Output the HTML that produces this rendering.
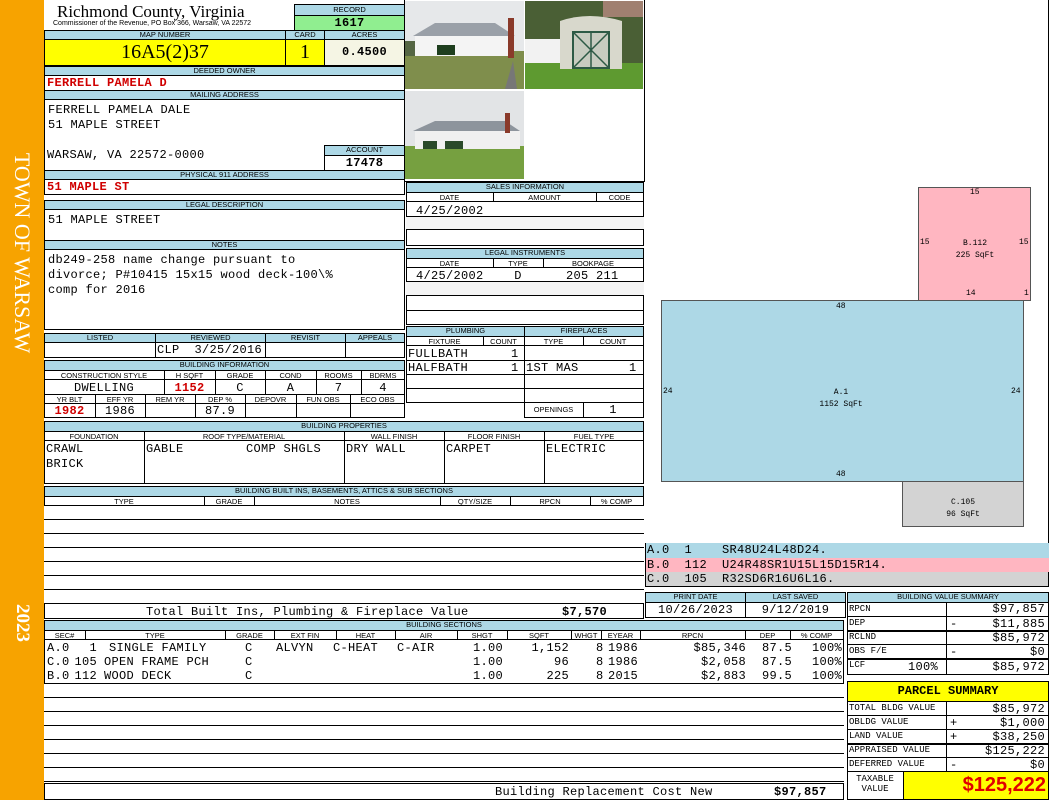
<!DOCTYPE html>
<html><head><meta charset="utf-8"><style>
*{margin:0;padding:0}
body{width:1050px;height:800px;position:relative;background:#fff;overflow:hidden;font-family:"Liberation Sans",sans-serif}
.a{position:absolute;box-sizing:border-box;white-space:nowrap}
.h{position:absolute;box-sizing:border-box;background:#add8e6;border:1px solid #000;font-size:7.5px;text-align:center;line-height:8px;color:#000;white-space:nowrap;overflow:hidden}
.w{position:absolute;box-sizing:border-box;background:#fff;border:1px solid #000;white-space:nowrap;overflow:hidden}
.m{font-family:"Liberation Mono",monospace;font-size:12px;line-height:14px;letter-spacing:0.3px}
.r{color:#d00000;font-weight:bold}
.c{text-align:center}
.rt{text-align:right;padding-right:3px}
.sv{font-family:"Liberation Mono",monospace;font-size:9px}
.hl{font-size:7.5px;text-align:center;position:absolute}
</style></head><body>
<div class="a" style="left:0;top:0;width:44px;height:800px;background:#f7a300"></div>
<div class="a" style="left:-108px;top:240px;width:260px;height:26px;transform:rotate(90deg);color:#fff;font:22px 'Liberation Serif',serif;text-align:center">TOWN OF WARSAW</div>
<div class="a" style="left:-8px;top:612px;width:60px;height:22px;transform:rotate(90deg);color:#fff;font:bold 19px 'Liberation Serif',serif;text-align:center">2023</div>

<div class="a" style="left:57px;top:2px;font:17px 'Liberation Serif',serif">Richmond County, Virginia</div>
<div class="a" style="left:53px;top:20px;font:7px 'Liberation Sans'">Commissioner of the Revenue, PO Box 366, Warsaw, VA 22572</div>
<div class="h" style="left:294px;top:4px;width:111px;height:12px;line-height:10px">RECORD</div>
<div class="w m" style="left:294px;top:15px;width:111px;height:16px;background:#90ee90;text-align:center;font-weight:bold;line-height:14px">1617</div>

<div class="h" style="left:44px;top:30px;width:242px;height:10px">MAP NUMBER</div>
<div class="h" style="left:285px;top:30px;width:40px;height:10px">CARD</div>
<div class="h" style="left:324px;top:30px;width:81px;height:10px">ACRES</div>
<div class="w c" style="left:44px;top:39px;width:242px;height:27px;background:#ffff00;font:20px 'Liberation Serif';line-height:25px">16A5(2)37</div>
<div class="w c" style="left:285px;top:39px;width:40px;height:27px;background:#ffff00;font:20px 'Liberation Serif';line-height:25px">1</div>
<div class="w c m" style="left:324px;top:39px;width:81px;height:27px;background:#f5f5e4;font-weight:bold;line-height:25px">0.4500</div>

<div class="h" style="left:44px;top:66px;width:361px;height:10px">DEEDED OWNER</div>
<div class="w m r" style="left:44px;top:75px;width:361px;height:16px;padding-left:2px">FERRELL PAMELA D</div>
<div class="h" style="left:44px;top:90px;width:361px;height:10px">MAILING ADDRESS</div>
<div class="w m" style="left:44px;top:99px;width:361px;height:72px;padding:3px 0 0 3px;line-height:15px">FERRELL PAMELA DALE<br>51 MAPLE STREET</div>
<div class="a m" style="left:47px;top:148px">WARSAW, VA 22572-0000</div>
<div class="h" style="left:324px;top:145px;width:81px;height:11px">ACCOUNT</div>
<div class="w m c" style="left:324px;top:155px;width:81px;height:16px;font-weight:bold;line-height:14px">17478</div>
<div class="h" style="left:44px;top:170px;width:361px;height:10px">PHYSICAL 911 ADDRESS</div>
<div class="w m r" style="left:44px;top:179px;width:361px;height:16px;padding-left:2px">51 MAPLE ST</div>

<div class="h" style="left:44px;top:200px;width:361px;height:10px">LEGAL DESCRIPTION</div>
<div class="w m" style="left:44px;top:209px;width:361px;height:32px;padding:3px 0 0 3px">51 MAPLE STREET</div>
<div class="h" style="left:44px;top:240px;width:361px;height:10px">NOTES</div>
<div class="w m" style="left:44px;top:249px;width:361px;height:81px;padding:3px 0 0 3px;line-height:15px">db249-258 name change pursuant to<br>divorce; P#10415 15x15 wood deck-100\%<br>comp for 2016</div>

<div class="h" style="left:44px;top:333px;width:112px;height:10px">LISTED</div>
<div class="h" style="left:155px;top:333px;width:111px;height:10px">REVIEWED</div>
<div class="h" style="left:265px;top:333px;width:81px;height:10px">REVISIT</div>
<div class="h" style="left:345px;top:333px;width:60px;height:10px">APPEALS</div>
<div class="w" style="left:44px;top:342px;width:112px;height:16px"></div>
<div class="w m" style="left:155px;top:342px;width:111px;height:16px;padding-left:1px">CLP&nbsp;&nbsp;3/25/2016</div>
<div class="w" style="left:265px;top:342px;width:81px;height:16px"></div>
<div class="w" style="left:345px;top:342px;width:60px;height:16px"></div>

<div class="h" style="left:44px;top:360px;width:361px;height:11px">BUILDING INFORMATION</div>
<div class="w" style="left:44px;top:370px;width:361px;height:48px"></div>
<div class="hl" style="left:44px;top:371px;width:120px">CONSTRUCTION STYLE</div>
<div class="hl" style="left:164px;top:371px;width:51px">H SQFT</div>
<div class="hl" style="left:215px;top:371px;width:50px">GRADE</div>
<div class="hl" style="left:265px;top:371px;width:51px">COND</div>
<div class="hl" style="left:316px;top:371px;width:45px">ROOMS</div>
<div class="hl" style="left:361px;top:371px;width:44px">BDRMS</div>
<div class="a" style="left:44px;top:379px;width:361px;border-top:1px solid #000"></div>
<div class="a m c" style="left:44px;top:381px;width:120px">DWELLING</div>
<div class="a m c r" style="left:164px;top:381px;width:51px">1152</div>
<div class="a m c" style="left:215px;top:381px;width:50px">C</div>
<div class="a m c" style="left:265px;top:381px;width:51px">A</div>
<div class="a m c" style="left:316px;top:381px;width:45px">7</div>
<div class="a m c" style="left:361px;top:381px;width:44px">4</div>
<div class="a" style="left:164px;top:370px;height:24px;border-left:1px solid #000"></div>
<div class="a" style="left:215px;top:370px;height:24px;border-left:1px solid #000"></div>
<div class="a" style="left:265px;top:370px;height:24px;border-left:1px solid #000"></div>
<div class="a" style="left:316px;top:370px;height:24px;border-left:1px solid #000"></div>
<div class="a" style="left:361px;top:370px;height:24px;border-left:1px solid #000"></div>
<div class="a" style="left:44px;top:394px;width:361px;border-top:1px solid #000"></div>
<div class="hl" style="left:44px;top:395px;width:51px">YR BLT</div>
<div class="hl" style="left:95px;top:395px;width:50px">EFF YR</div>
<div class="hl" style="left:145px;top:395px;width:50px">REM YR</div>
<div class="hl" style="left:195px;top:395px;width:50px">DEP %</div>
<div class="hl" style="left:245px;top:395px;width:51px">DEPOVR</div>
<div class="hl" style="left:296px;top:395px;width:54px">FUN OBS</div>
<div class="hl" style="left:350px;top:395px;width:55px">ECO OBS</div>
<div class="a" style="left:44px;top:403px;width:361px;border-top:1px solid #000"></div>
<div class="a m c r" style="left:44px;top:404px;width:51px">1982</div>
<div class="a m c" style="left:95px;top:404px;width:50px">1986</div>
<div class="a m c" style="left:195px;top:404px;width:50px">87.9</div>
<div class="a" style="left:95px;top:394px;height:24px;border-left:1px solid #000"></div>
<div class="a" style="left:145px;top:394px;height:24px;border-left:1px solid #000"></div>
<div class="a" style="left:195px;top:394px;height:24px;border-left:1px solid #000"></div>
<div class="a" style="left:245px;top:394px;height:24px;border-left:1px solid #000"></div>
<div class="a" style="left:296px;top:394px;height:24px;border-left:1px solid #000"></div>
<div class="a" style="left:350px;top:394px;height:24px;border-left:1px solid #000"></div>

<div class="a" style="left:404px;top:0;width:241px;height:182px;border:1px solid #000;border-top:none"></div>
<svg class="a" style="left:405px;top:1px" width="119" height="88" viewBox="0 0 119 88"><rect width="119" height="88" fill="#e6e8ea"/><rect y="50" width="119" height="38" fill="#7f8e4c"/><polygon points="8,35 30,22 90,22 110,35" fill="#9aa0a8"/><rect x="10" y="35" width="95" height="20" fill="#f4f4f4"/><rect x="103" y="17" width="6" height="40" fill="#8a3a2a"/><rect x="32" y="44" width="18" height="10" fill="#1e3e1e"/><rect x="0" y="40" width="10" height="15" fill="#556644"/><path d="M108 60 L100 88 L112 88 Z" fill="#777"/></svg>
<svg class="a" style="left:525px;top:1px" width="118" height="88" viewBox="0 0 118 88"><rect width="118" height="88" fill="#4a5f35"/><rect y="38" width="35" height="26" fill="#f2f2f2"/><rect y="62" width="118" height="26" fill="#5e9a30"/><path d="M35 20 Q64 10 97 20 L97 68 L35 68 Z" fill="#d8d8cc"/><rect x="48" y="31" width="36" height="36" fill="#c8ccc0" stroke="#2d5a45" stroke-width="2"/><path d="M48 31 L84 67 M84 31 L48 67 M66 31 V67" stroke="#2d5a45" stroke-width="1.5"/><rect x="78" y="0" width="40" height="16" fill="#a08070"/></svg>
<svg class="a" style="left:405px;top:91px" width="119" height="88" viewBox="0 0 119 88"><rect width="119" height="88" fill="#e2e4e6"/><rect y="55" width="119" height="33" fill="#76a040"/><polygon points="8,40 30,30 100,30 115,40" fill="#8d949c"/><rect x="10" y="40" width="105" height="18" fill="#f0f0f0"/><rect x="18" y="50" width="14" height="8" fill="#2a4a2a"/><rect x="40" y="50" width="18" height="8" fill="#2a4a2a"/><rect x="100" y="22" width="5" height="20" fill="#8a3a2a"/></svg>

<div class="h" style="left:406px;top:182px;width:238px;height:11px">SALES INFORMATION</div>
<div class="w" style="left:406px;top:192px;width:238px;height:54px"></div>
<div class="hl" style="left:406px;top:193px;width:87px">DATE</div>
<div class="hl" style="left:493px;top:193px;width:103px">AMOUNT</div>
<div class="hl" style="left:596px;top:193px;width:47px">CODE</div>
<div class="a" style="left:493px;top:192px;height:10px;border-left:1px solid #000"></div>
<div class="a" style="left:596px;top:192px;height:10px;border-left:1px solid #000"></div>
<div class="a" style="left:406px;top:201px;width:238px;border-top:1px solid #000"></div>
<div class="a m" style="left:416px;top:204px">4/25/2002</div>
<div class="a" style="left:406px;top:216px;width:238px;height:14px;border-top:1px solid #000;border-bottom:1px solid #000;background:#f4f4f4"></div>

<div class="h" style="left:406px;top:248px;width:238px;height:11px">LEGAL INSTRUMENTS</div>
<div class="w" style="left:406px;top:258px;width:238px;height:67px"></div>
<div class="hl" style="left:406px;top:259px;width:87px">DATE</div>
<div class="hl" style="left:493px;top:259px;width:50px">TYPE</div>
<div class="hl" style="left:543px;top:259px;width:100px">BOOKPAGE</div>
<div class="a" style="left:493px;top:258px;height:10px;border-left:1px solid #000"></div>
<div class="a" style="left:543px;top:258px;height:10px;border-left:1px solid #000"></div>
<div class="a" style="left:406px;top:267px;width:238px;border-top:1px solid #000"></div>
<div class="a m" style="left:416px;top:269px">4/25/2002</div>
<div class="a m c" style="left:493px;top:269px;width:50px">D</div>
<div class="a m" style="left:566px;top:269px">205 211</div>
<div class="a" style="left:406px;top:281px;width:238px;height:15px;border-top:1px solid #000;border-bottom:1px solid #000;background:#f4f4f4"></div>
<div class="a" style="left:406px;top:310px;width:238px;border-top:1px solid #000"></div>

<div class="h" style="left:406px;top:326px;width:119px;height:11px">PLUMBING</div>
<div class="h" style="left:524px;top:326px;width:120px;height:11px">FIREPLACES</div>
<div class="w" style="left:406px;top:336px;width:119px;height:67px"></div>
<div class="w" style="left:524px;top:336px;width:120px;height:82px"></div>
<div class="hl" style="left:406px;top:337px;width:77px">FIXTURE</div>
<div class="hl" style="left:483px;top:337px;width:41px">COUNT</div>
<div class="hl" style="left:524px;top:337px;width:59px">TYPE</div>
<div class="hl" style="left:583px;top:337px;width:60px">COUNT</div>
<div class="a" style="left:483px;top:336px;height:10px;border-left:1px solid #000"></div>
<div class="a" style="left:583px;top:336px;height:10px;border-left:1px solid #000"></div>
<div class="a" style="left:406px;top:345px;width:238px;border-top:1px solid #000"></div>
<div class="a m" style="left:408px;top:347px">FULLBATH</div><div class="a m" style="left:511px;top:347px">1</div>
<div class="a" style="left:406px;top:360px;width:238px;border-top:1px solid #000"></div>
<div class="a m" style="left:408px;top:361px">HALFBATH</div><div class="a m" style="left:511px;top:361px">1</div>
<div class="a m" style="left:526px;top:361px">1ST MAS</div><div class="a m" style="left:629px;top:361px">1</div>
<div class="a" style="left:406px;top:374px;width:238px;border-top:1px solid #000"></div>
<div class="a" style="left:406px;top:388px;width:238px;border-top:1px solid #000"></div>
<div class="a" style="left:524px;top:402px;width:120px;border-top:1px solid #000"></div>
<div class="a" style="left:583px;top:402px;height:16px;border-left:1px solid #000"></div>
<div class="hl" style="left:524px;top:405px;width:59px">OPENINGS</div>
<div class="a m c" style="left:583px;top:403px;width:60px">1</div>

<div class="h" style="left:44px;top:421px;width:600px;height:11px">BUILDING PROPERTIES</div>
<div class="w" style="left:44px;top:431px;width:600px;height:53px"></div>
<div class="a" style="left:44px;top:440px;width:600px;border-top:1px solid #000"></div>
<div class="hl" style="left:44px;top:432px;width:100px">FOUNDATION</div>
<div class="hl" style="left:144px;top:432px;width:200px">ROOF TYPE/MATERIAL</div>
<div class="hl" style="left:344px;top:432px;width:100px">WALL FINISH</div>
<div class="hl" style="left:444px;top:432px;width:100px">FLOOR FINISH</div>
<div class="hl" style="left:544px;top:432px;width:100px">FUEL TYPE</div>
<div class="a" style="left:144px;top:431px;height:53px;border-left:1px solid #000"></div>
<div class="a" style="left:344px;top:431px;height:53px;border-left:1px solid #000"></div>
<div class="a" style="left:444px;top:431px;height:53px;border-left:1px solid #000"></div>
<div class="a" style="left:544px;top:431px;height:53px;border-left:1px solid #000"></div>
<div class="a m" style="left:46px;top:442px;line-height:15px">CRAWL<br>BRICK</div>
<div class="a m" style="left:146px;top:442px">GABLE</div>
<div class="a m" style="left:246px;top:442px">COMP SHGLS</div>
<div class="a m" style="left:346px;top:442px">DRY WALL</div>
<div class="a m" style="left:446px;top:442px">CARPET</div>
<div class="a m" style="left:546px;top:442px">ELECTRIC</div>

<div class="h" style="left:44px;top:486px;width:600px;height:11px">BUILDING BUILT INS, BASEMENTS, ATTICS &amp; SUB SECTIONS</div>
<div class="w" style="left:44px;top:496px;width:600px;height:123px"></div>
<div class="hl" style="left:44px;top:497px;width:160px">TYPE</div>
<div class="hl" style="left:204px;top:497px;width:50px">GRADE</div>
<div class="hl" style="left:254px;top:497px;width:186px">NOTES</div>
<div class="hl" style="left:440px;top:497px;width:70px">QTY/SIZE</div>
<div class="hl" style="left:510px;top:497px;width:80px">RPCN</div>
<div class="hl" style="left:590px;top:497px;width:53px">% COMP</div>
<div class="a" style="left:204px;top:496px;height:10px;border-left:1px solid #000"></div>
<div class="a" style="left:254px;top:496px;height:10px;border-left:1px solid #000"></div>
<div class="a" style="left:440px;top:496px;height:10px;border-left:1px solid #000"></div>
<div class="a" style="left:510px;top:496px;height:10px;border-left:1px solid #000"></div>
<div class="a" style="left:590px;top:496px;height:10px;border-left:1px solid #000"></div>
<div class="a" style="left:44px;top:505px;width:600px;height:98px;border-top:1px solid #000;background:repeating-linear-gradient(#fff 0 13px,#000 13px 14px)"></div>
<div class="a" style="left:44px;top:603px;width:600px;border-top:1px solid #000"></div>
<div class="a m" style="left:146px;top:605px">Total Built Ins, Plumbing &amp; Fireplace Value</div>
<div class="a m" style="left:562px;top:605px;font-weight:bold">$7,570</div>

<div class="h" style="left:44px;top:620px;width:800px;height:11px">BUILDING SECTIONS</div>
<div class="w" style="left:44px;top:630px;width:800px;height:170px"></div>
<div class="a" style="left:44px;top:639px;width:800px;border-top:1px solid #000"></div>
<div class="hl" style="left:44px;top:631px;width:41px">SEC#</div>
<div class="hl" style="left:85px;top:631px;width:140px">TYPE</div>
<div class="hl" style="left:225px;top:631px;width:49px">GRADE</div>
<div class="hl" style="left:274px;top:631px;width:62px">EXT FIN</div>
<div class="hl" style="left:336px;top:631px;width:59px">HEAT</div>
<div class="hl" style="left:395px;top:631px;width:62px">AIR</div>
<div class="hl" style="left:457px;top:631px;width:50px">SHGT</div>
<div class="hl" style="left:507px;top:631px;width:64px">SQFT</div>
<div class="hl" style="left:571px;top:631px;width:30px">WHGT</div>
<div class="hl" style="left:601px;top:631px;width:39px">EYEAR</div>
<div class="hl" style="left:640px;top:631px;width:105px">RPCN</div>
<div class="hl" style="left:745px;top:631px;width:45px">DEP</div>
<div class="hl" style="left:790px;top:631px;width:53px">% COMP</div>
<div class="a" style="left:85px;top:630px;height:10px;border-left:1px solid #000"></div>
<div class="a" style="left:225px;top:630px;height:10px;border-left:1px solid #000"></div>
<div class="a" style="left:274px;top:630px;height:10px;border-left:1px solid #000"></div>
<div class="a" style="left:336px;top:630px;height:10px;border-left:1px solid #000"></div>
<div class="a" style="left:395px;top:630px;height:10px;border-left:1px solid #000"></div>
<div class="a" style="left:457px;top:630px;height:10px;border-left:1px solid #000"></div>
<div class="a" style="left:507px;top:630px;height:10px;border-left:1px solid #000"></div>
<div class="a" style="left:571px;top:630px;height:10px;border-left:1px solid #000"></div>
<div class="a" style="left:601px;top:630px;height:10px;border-left:1px solid #000"></div>
<div class="a" style="left:640px;top:630px;height:10px;border-left:1px solid #000"></div>
<div class="a" style="left:745px;top:630px;height:10px;border-left:1px solid #000"></div>
<div class="a" style="left:790px;top:630px;height:10px;border-left:1px solid #000"></div>

<div class="a m" style="left:47px;top:641px">A.0</div><div class="a m" style="left:56px;top:641px;width:41px;text-align:right">1</div><div class="a m" style="left:109px;top:641px">SINGLE FAMILY</div><div class="a m" style="left:245px;top:641px">C</div><div class="a m" style="left:276px;top:641px">ALVYN</div><div class="a m" style="left:333px;top:641px">C-HEAT</div><div class="a m" style="left:397px;top:641px">C-AIR</div><div class="a m" style="left:460px;top:641px;width:43px;text-align:right">1.00</div><div class="a m" style="left:510px;top:641px;width:59px;text-align:right">1,152</div><div class="a m" style="left:596px;top:641px">8</div><div class="a m" style="left:608px;top:641px">1986</div><div class="a m" style="left:660px;top:641px;width:86px;text-align:right">$85,346</div><div class="a m" style="left:750px;top:641px;width:42px;text-align:right">87.5</div><div class="a m" style="left:795px;top:641px;width:47px;text-align:right">100%</div>
<div class="a m" style="left:47px;top:655px">C.0</div><div class="a m" style="left:56px;top:655px;width:41px;text-align:right">105</div><div class="a m" style="left:104px;top:655px">OPEN FRAME PCH</div><div class="a m" style="left:245px;top:655px">C</div><div class="a m" style="left:460px;top:655px;width:43px;text-align:right">1.00</div><div class="a m" style="left:510px;top:655px;width:59px;text-align:right">96</div><div class="a m" style="left:596px;top:655px">8</div><div class="a m" style="left:608px;top:655px">1986</div><div class="a m" style="left:660px;top:655px;width:86px;text-align:right">$2,058</div><div class="a m" style="left:750px;top:655px;width:42px;text-align:right">87.5</div><div class="a m" style="left:795px;top:655px;width:47px;text-align:right">100%</div>
<div class="a m" style="left:47px;top:669px">B.0</div><div class="a m" style="left:56px;top:669px;width:41px;text-align:right">112</div><div class="a m" style="left:104px;top:669px">WOOD DECK</div><div class="a m" style="left:245px;top:669px">C</div><div class="a m" style="left:460px;top:669px;width:43px;text-align:right">1.00</div><div class="a m" style="left:510px;top:669px;width:59px;text-align:right">225</div><div class="a m" style="left:596px;top:669px">8</div><div class="a m" style="left:608px;top:669px">2015</div><div class="a m" style="left:660px;top:669px;width:86px;text-align:right">$2,883</div><div class="a m" style="left:750px;top:669px;width:42px;text-align:right">99.5</div><div class="a m" style="left:795px;top:669px;width:47px;text-align:right">100%</div>

<div class="a" style="left:44px;top:683px;width:800px;height:100px;border-top:1px solid #000;background:repeating-linear-gradient(#fff 0 13px,#000 13px 14px)"></div>
<div class="a" style="left:44px;top:783px;width:800px;border-top:1px solid #000"></div>
<div class="a m" style="left:495px;top:785px">Building Replacement Cost New</div>
<div class="a m" style="left:774px;top:785px;font-weight:bold">$97,857</div>

<div class="a" style="left:645px;top:0;width:404px;height:544px;border:1px solid #000;border-left:none;border-top:none"></div>
<div class="a" style="left:918px;top:187px;width:113px;height:114px;background:#ffb6c1;border:1px solid #555"></div>
<div class="a" style="left:661px;top:300px;width:363px;height:182px;background:#add8e6;border:1px solid #555"></div>
<div class="a" style="left:902px;top:481px;width:122px;height:46px;background:#d3d3d3;border:1px solid #555"></div>
<div class="a sv" style="font-size:8px;left:970px;top:188px">15</div>
<div class="a sv" style="font-size:8px;left:920px;top:238px">15</div>
<div class="a sv" style="font-size:8px;left:1019px;top:238px">15</div>
<div class="a sv c" style="font-size:8px;left:940px;top:238px;width:70px;line-height:12px">B.112<br>225 SqFt</div>
<div class="a sv" style="font-size:8px;left:966px;top:289px">14</div>
<div class="a sv" style="font-size:8px;left:1024px;top:289px">1</div>
<div class="a sv" style="font-size:8px;left:836px;top:302px">48</div>
<div class="a sv" style="font-size:8px;left:663px;top:387px">24</div>
<div class="a sv" style="font-size:8px;left:1011px;top:387px">24</div>
<div class="a sv c" style="font-size:8px;left:806px;top:387px;width:70px;line-height:12px">A.1<br>1152 SqFt</div>
<div class="a sv" style="font-size:8px;left:836px;top:470px">48</div>
<div class="a sv c" style="font-size:8px;left:928px;top:497px;width:70px;line-height:12px">C.105<br>96 SqFt</div>

<div class="a m" style="left:645px;top:543px;width:404px;height:15px;background:#add8e6;border-left:1px solid #000;padding-left:1px;white-space:pre;line-height:15px">A.0  1    SR48U24L48D24.</div>
<div class="a m" style="left:645px;top:558px;width:404px;height:14px;background:#ffb6c1;border-left:1px solid #000;padding-left:1px;white-space:pre;line-height:14px">B.0  112  U24R48SR1U15L15D15R14.</div>
<div class="a m" style="left:645px;top:572px;width:404px;height:15px;background:#d3d3d3;border:1px solid #000;border-top:none;padding-left:1px;white-space:pre;line-height:14px">C.0  105  R32SD6R16U6L16.</div>

<div class="h" style="left:645px;top:592px;width:101px;height:11px">PRINT DATE</div>
<div class="h" style="left:745px;top:592px;width:101px;height:11px">LAST SAVED</div>
<div class="w m c" style="left:645px;top:602px;width:101px;height:16px">10/26/2023</div>
<div class="w m c" style="left:745px;top:602px;width:101px;height:16px">9/12/2019</div>

<div class="h" style="left:847px;top:592px;width:202px;height:11px">BUILDING VALUE SUMMARY</div>
<div class="w" style="left:847px;top:602px;width:202px;height:73px"></div>
<div class="a" style="left:946px;top:602px;height:73px;border-left:1px solid #000"></div>
<div class="a" style="left:847px;top:616px;width:202px;border-top:1px solid #000"></div>
<div class="a" style="left:847px;top:630px;width:202px;border-top:2px solid #000"></div>
<div class="a" style="left:847px;top:644px;width:202px;border-top:1px solid #000"></div>
<div class="a" style="left:847px;top:658px;width:202px;border-top:2px solid #000"></div>
<div class="a sv" style="left:849px;top:604px">RPCN</div><div class="a m rt" style="left:946px;top:602px;width:102px">$97,857</div>
<div class="a sv" style="left:849px;top:618px">DEP</div><div class="a m" style="left:950px;top:617px">-</div><div class="a m rt" style="left:946px;top:617px;width:102px">$11,885</div>
<div class="a sv" style="left:849px;top:632px">RCLND</div><div class="a m rt" style="left:946px;top:631px;width:102px">$85,972</div>
<div class="a sv" style="left:849px;top:646px">OBS F/E</div><div class="a m" style="left:950px;top:645px">-</div><div class="a m rt" style="left:946px;top:645px;width:102px">$0</div>
<div class="a sv" style="left:849px;top:660px">LCF</div><div class="a m" style="left:908px;top:660px">100%</div><div class="a m rt" style="left:946px;top:660px;width:102px">$85,972</div>

<div class="w c" style="left:847px;top:681px;width:202px;height:21px;background:#ffff00;font:bold 12px 'Liberation Mono';line-height:19px">PARCEL SUMMARY</div>
<div class="w" style="left:847px;top:701px;width:202px;height:99px"></div>
<div class="a" style="left:903px;top:771px;width:146px;height:29px;background:#ffff00;border:1px solid #000;border-top:none"></div>
<div class="a" style="left:946px;top:701px;height:70px;border-left:1px solid #000"></div>
<div class="a" style="left:847px;top:715px;width:202px;border-top:1px solid #000"></div>
<div class="a" style="left:847px;top:729px;width:202px;border-top:1px solid #000"></div>
<div class="a" style="left:847px;top:743px;width:202px;border-top:2px solid #000"></div>
<div class="a" style="left:847px;top:757px;width:202px;border-top:1px solid #000"></div>
<div class="a" style="left:847px;top:771px;width:202px;border-top:1px solid #000"></div>
<div class="a sv" style="left:849px;top:703px">TOTAL BLDG VALUE</div><div class="a m rt" style="left:946px;top:702px;width:102px">$85,972</div>
<div class="a sv" style="left:849px;top:717px">OBLDG VALUE</div><div class="a m" style="left:950px;top:716px">+</div><div class="a m rt" style="left:946px;top:716px;width:102px">$1,000</div>
<div class="a sv" style="left:849px;top:731px">LAND VALUE</div><div class="a m" style="left:950px;top:730px">+</div><div class="a m rt" style="left:946px;top:730px;width:102px">$38,250</div>
<div class="a sv" style="left:849px;top:745px">APPRAISED VALUE</div><div class="a m rt" style="left:946px;top:744px;width:102px">$125,222</div>
<div class="a sv" style="left:849px;top:759px">DEFERRED VALUE</div><div class="a m" style="left:950px;top:758px">-</div><div class="a m rt" style="left:946px;top:758px;width:102px">$0</div>
<div class="a sv c" style="left:847px;top:774px;width:56px;line-height:10px">TAXABLE<br>VALUE</div>
<div class="a rt" style="left:903px;top:772px;width:146px;color:#e00000;font:bold 20px 'Liberation Sans';line-height:26px">$125,222</div>
</body></html>
